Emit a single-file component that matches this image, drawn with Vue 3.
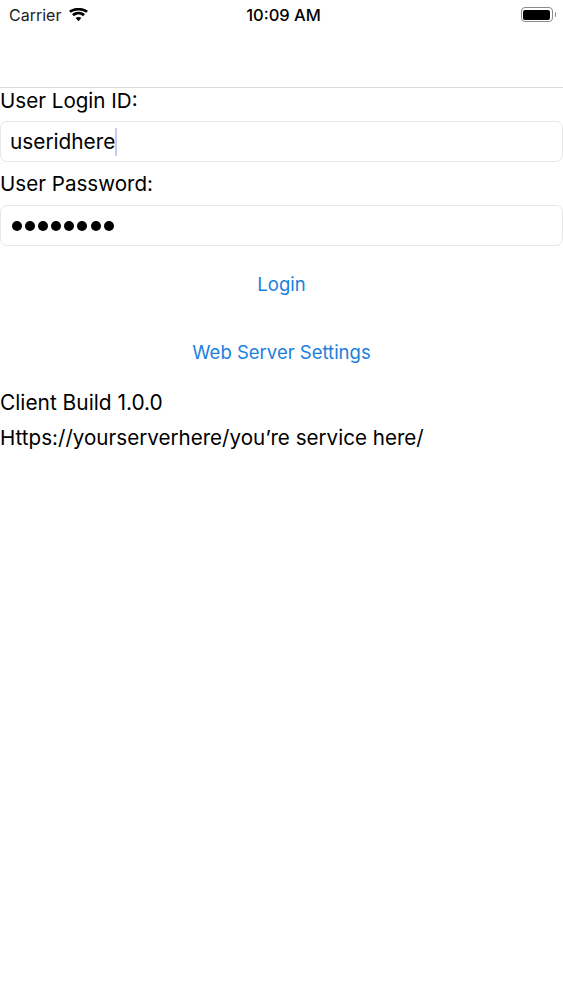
<template>
  <div class="screen">
    <div class="status-bar">
      <div class="status-left">
        <span class="carrier">Carrier</span>
        <svg class="wifi" width="19" height="14" viewBox="0 0 20 14">
          <path d="M10 13.5 L7 10.2 C8.7 8.7 11.3 8.7 13 10.2 Z" fill="#000" />
          <path d="M5.2 8.3 L3.2 6.1 C7 2.7 13 2.7 16.8 6.1 L14.8 8.3 C12 5.9 8 5.9 5.2 8.3 Z" fill="#000" />
          <path d="M1.9 4.7 L0 2.6 C5.7 -1.5 14.3 -1.5 20 2.6 L18.1 4.7 C13.3 1.3 6.7 1.3 1.9 4.7 Z" fill="#000" />
        </svg>
      </div>
      <span class="clock">10:09 AM</span>
      <div class="battery">
        <div class="battery-body"><div class="battery-fill"></div></div>
        <div class="battery-cap"></div>
      </div>
    </div>
    <div class="nav-bar"></div>

    <label class="field-label first">User Login ID:</label>
    <div class="input">
      <span>useridhere</span><span class="caret"></span>
    </div>
    <label class="field-label second">User Password:</label>
    <div class="input">
      <div class="dots">
        <span v-for="n in 8" :key="n" class="dot"></span>
      </div>
    </div>

    <button class="link login">Login</button>
    <button class="link settings">Web Server Settings</button>

    <div class="info build">Client Build 1.0.0</div>
    <div class="info url">Https://yourserverhere/you’re service here/</div>
  </div>
</template>

<script setup>
</script>

<style>
html, body {
  background: #fff;
}
</style>

<style scoped>
.screen {
  width: 563px;
  height: 1000px;
  background: #fff;
  color: #000;
  font-family: Inter, "Liberation Sans", sans-serif;
  overflow: hidden;
}

.status-bar {
  height: 30px;
  display: grid;
  grid-template-columns: 1fr auto 1fr;
  align-items: center;
  padding: 0 7px 1px 9px;
  box-sizing: border-box;
}

.status-left {
  display: flex;
  align-items: center;
  gap: 8px;
}

.carrier {
  font-size: 16px;
  color: #222;
}

.clock {
  margin-left: 2px;
  font-size: 16.5px;
  font-weight: 500;
}

.battery {
  justify-self: end;
  display: flex;
  align-items: center;
  gap: 2px;
}

.battery-body {
  width: 32px;
  height: 15px;
  box-sizing: border-box;
  border: 1px solid #8a8a8a;
  border-radius: 4px;
  padding: 1.5px;
}

.battery-fill {
  height: 100%;
  background: #000;
  border-radius: 2px;
}

.battery-cap {
  width: 1.5px;
  height: 5px;
  background: #8a8a8a;
  border-radius: 0 1px 1px 0;
}

.nav-bar {
  height: 58px;
  border-bottom: 1px solid #dcdcdc;
  box-sizing: border-box;
}

.field-label {
  display: block;
  font-size: 20.6px;
  line-height: 26px;
}

.first {
  margin-bottom: 7px;
}

.second {
  margin-top: 9px;
  margin-bottom: 8px;
}

.input {
  height: 41px;
  box-sizing: border-box;
  border: 1px solid #e6e6e6;
  border-radius: 7px;
  padding-left: 9px;
  display: flex;
  align-items: center;
  font-size: 20.8px;
}

.caret {
  width: 2px;
  height: 28px;
  background: #c9c9f2;
}

.dots {
  display: flex;
  gap: 3.1px;
  padding-left: 2px;
}

.dot {
  width: 10px;
  height: 10px;
  border-radius: 50%;
  background: #000;
}

.link {
  display: block;
  width: 100%;
  padding: 0;
  border: 0;
  background: none;
  color: #1b80dc;
  font-family: inherit;
  font-size: 18.5px;
  line-height: 24px;
  text-align: center;
}

.login {
  margin-top: 26px;
}

.settings {
  margin-top: 44px;
}

.info {
  font-size: 20.6px;
  line-height: 26px;
}

.build {
  margin-top: 26px;
  font-size: 20.9px;
}

.url {
  margin-top: 9px;
}
</style>
